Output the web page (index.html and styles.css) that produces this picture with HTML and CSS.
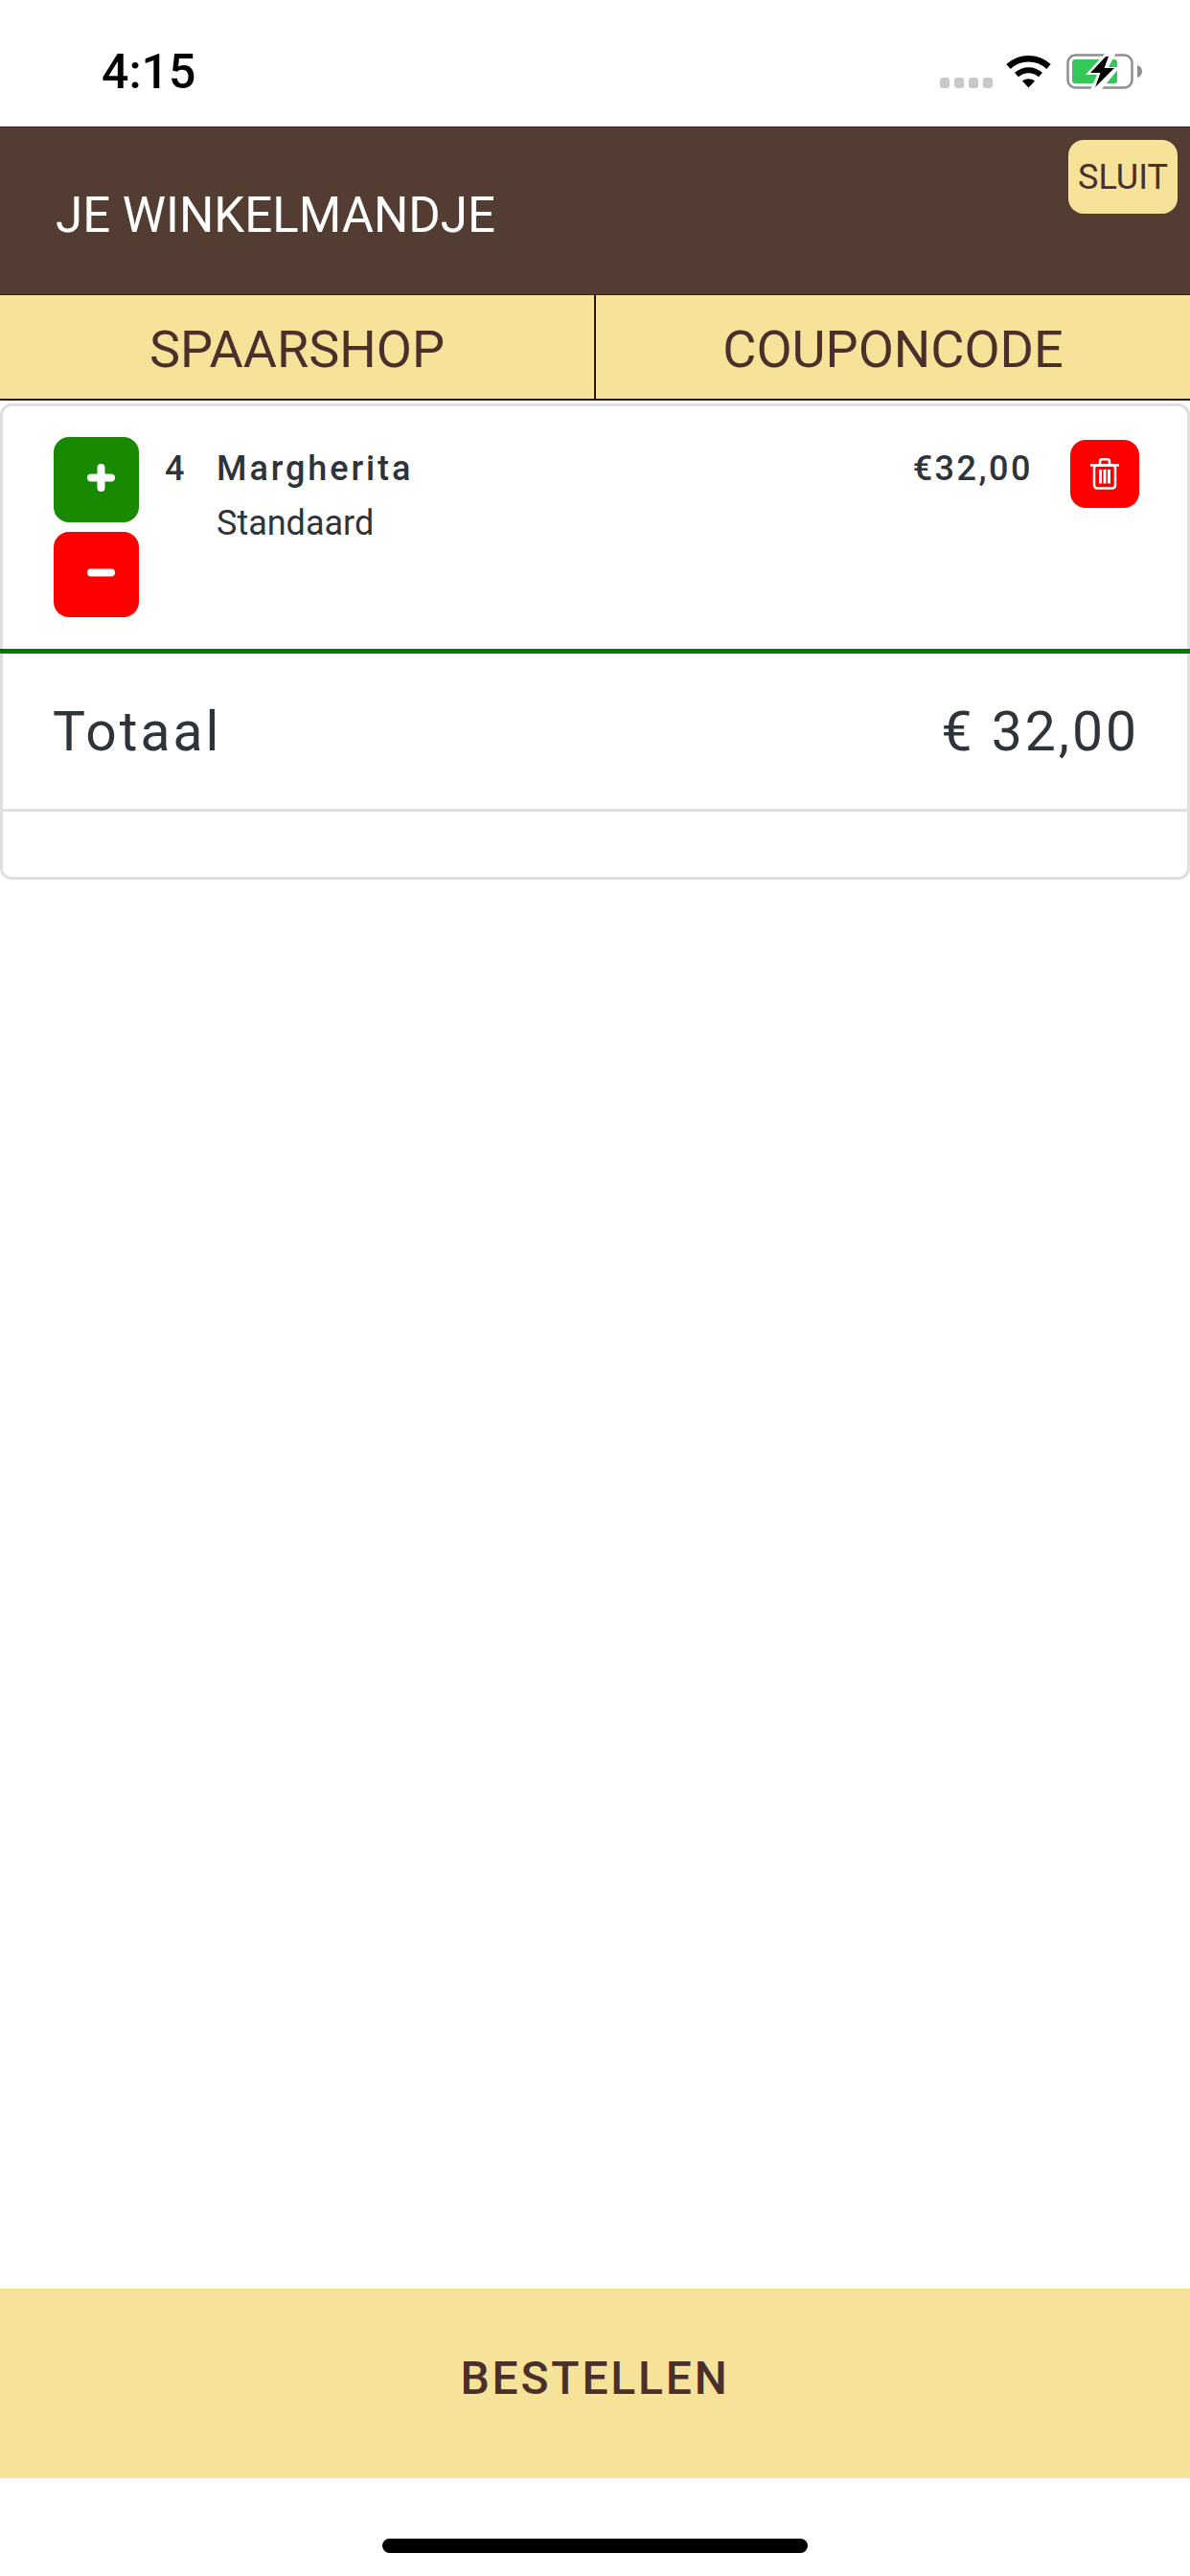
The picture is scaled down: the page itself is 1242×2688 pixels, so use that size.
FILE: index.html
```html
<!DOCTYPE html>
<html lang="en">

<head>
    <meta charset="UTF-8">
    <meta content="width=device-width, initial-scale=1.0" name="viewport">
    <title>Je winkelmandje</title>
    <link rel="stylesheet" href="styles.css">
</head>

<body>
<div class="status-bar">
    <span class="status-time">4:15</span>
    <div class="status-icons">
        <div class="signal-dots"><i></i><i></i><i></i><i></i></div>
        <svg class="wifi" viewBox="0 0 47 35" width="47" height="35">
            <path d="M2.5 12.5C14.5 1.5 32.5 1.5 44.5 12.5" fill="none" stroke="#000" stroke-width="6.5"/>
            <path d="M11 21C18.500 14.500 28.500 14.500 36 21" fill="none" stroke="#000" stroke-width="6"/>
            <path d="M14.500 26.500L23.500 35L32.500 26.500C27 22.500 20 22.500 14.500 26.500Z" fill="#fff"/>
            <path d="M17 27.500L23.500 34.500L30 27.500C26 24.500 21 24.500 17 27.500Z" fill="#000"/>
        </svg>
        <svg class="battery" viewBox="0 0 80 37" width="80" height="37">
            <rect x="1.500" y="1.500" width="67" height="34" rx="8" fill="none" stroke="#8e8e8e" stroke-width="2.500"/>
            <rect x="6" y="6" width="47" height="25" rx="3" fill="#34c759"/>
            <path d="M74 12C77 13 79 15 79 18.500C79 22 77 24 74 25Z" fill="#8e8e8e"/>
            <path d="M41 -1L20 22H32L25 38L36 38L56 14H44L52 -1Z" fill="#fff"/>
            <path d="M41 3L25 20H35.500L30 35L50 15H39.500L44 3Z" fill="#000"/>
        </svg>
    </div>
</div>

<div class="header">
    <h1>JE WINKELMANDJE</h1>
    <button class="close-btn">SLUIT</button>
</div>

<div class="tabs">
    <div class="tab">SPAARSHOP</div>
    <div class="tab">COUPONCODE</div>
</div>

<div class="cart">
    <div class="cart-item">
        <div class="qty-btns">
            <button class="qty-btn plus">
                <svg viewBox="0 0 29 29" width="29" height="29"><path d="M14.500 4V25M4 14.500H25" stroke="#fff" stroke-width="8" stroke-linecap="round"/></svg>
            </button>
            <button class="qty-btn minus">
                <svg viewBox="0 0 29 9" width="29" height="9"><path d="M4 4.500H25" stroke="#fff" stroke-width="8" stroke-linecap="round"/></svg>
            </button>
        </div>
        <span class="item-qty">4</span>
        <div class="item-info">
            <div class="item-name">Margherita</div>
            <div class="item-size">Standaard</div>
        </div>
        <span class="item-price">€32,00</span>
        <button class="delete-btn">
            <svg viewBox="0 0 30 33" width="30" height="33" fill="none" stroke="#fff" stroke-width="2.500">
                <path d="M0 7.500H30M10 7V3.500C10 2 11 1.300 12.500 1.300H17.500C19 1.300 20 2 20 3.500V7"/>
                <rect x="4" y="7.500" width="22" height="24" rx="3"/>
                <path d="M10.500 12V26.500M15 12V26.500M19.500 12V26.500" stroke-width="3"/>
            </svg>
        </button>
    </div>
    <div class="cart-total">
        <span>Totaal</span>
        <span>€ 32,00</span>
    </div>
    <div class="cart-empty"></div>
</div>

<button class="order-btn">BESTELLEN</button>
<div class="home-area"><div class="home-bar"></div></div>
</body>

</html>
```

FILE: styles.css
```css
html, body {
    margin: 0;
    padding: 0;
    height: 100%;
    background-color: #fff;
}

body {
    display: flex;
    flex-direction: column;
    height: 2688px;
    overflow: hidden;
    font-family: Roboto, "Liberation Sans", sans-serif;
}

button {
    padding: 0;
    border: none;
    font-family: inherit;
}

.status-bar {
    display: flex;
    justify-content: space-between;
    align-items: flex-start;
    height: 132px;
    padding: 0 49px 0 106px;
    box-sizing: border-box;
}

.status-time {
    margin-top: 47px;
    font-size: 50px;
    line-height: 56px;
    font-weight: 500;
    color: #000;
}

.status-icons {
    display: flex;
    align-items: flex-end;
    margin-top: 56px;
}

.signal-dots {
    display: flex;
    gap: 5px;
    margin: 0 14px 1px 0;
}

.signal-dots i {
    width: 10px;
    height: 11px;
    border-radius: 3px;
    background-color: #c9c9c9;
}

.wifi {
    margin-right: 16px;
    margin-bottom: 1px;
}

.header {
    display: flex;
    justify-content: space-between;
    align-items: flex-start;
    height: 176px;
    padding: 13px 13px 0 58px;
    box-sizing: border-box;
    background-color: #533d33;
    border-top: 1px solid #3a1f1c;
    border-bottom: 1px solid #3a1f1c;
}

.header h1 {
    margin: 50px 0 0;
    font-size: 51px;
    line-height: 58px;
    font-weight: 400;
    color: #fff;
}

.close-btn {
    width: 114px;
    height: 77px;
    border-radius: 16px;
    background-color: #f7e29a;
    font-size: 36px;
    color: #4a2f2a;
}

.tabs {
    display: flex;
    height: 110px;
    border-bottom: 2px solid #2a1a16;
    box-sizing: border-box;
    background-color: #f7e29a;
}

.tab {
    flex: 1;
    display: flex;
    justify-content: center;
    align-items: center;
    padding-top: 4px;
    font-size: 54px;
    color: #4a2f2a;
}

.tab:first-child {
    border-right: 2px solid #2a1a16;
}

.cart {
    margin-top: 3px;
    border: 3px solid #e0e0e0;
    border-radius: 12px;
    color: #2f343b;
}

.cart-item {
    display: flex;
    align-items: flex-start;
    height: 258px;
    padding: 32px 53px 0 53px;
    box-sizing: border-box;
    border-bottom: 5px solid #007a00;
    margin: 0 -3px;
}

.qty-btns {
    display: flex;
    flex-direction: column;
    gap: 10px;
    margin: 0 27px 0 3px;
}

.qty-btn {
    display: flex;
    justify-content: flex-end;
    align-items: center;
    width: 89px;
    height: 89px;
    padding: 0 25px 4px 0;
    border-radius: 16px;
}

.plus {
    background-color: #198a00;
}

.minus {
    background-color: #ff0000;
}

.item-qty {
    width: 54px;
    margin-top: 13px;
    font-size: 36px;
    line-height: 40px;
    font-weight: 500;
}

.item-info {
    flex: 1;
    margin-top: 13px;
}

.item-name {
    font-size: 36px;
    line-height: 40px;
    font-weight: 500;
    letter-spacing: 2.900px;
}

.item-size {
    margin-top: 17px;
    font-size: 36px;
    line-height: 40px;
}

.item-price {
    margin: 13px 39px 0 0;
    font-size: 36px;
    line-height: 40px;
    font-weight: 500;
    letter-spacing: 2.500px;
}

.delete-btn {
    display: flex;
    justify-content: center;
    align-items: center;
    width: 72px;
    height: 71px;
    margin-top: 3px;
    border-radius: 16px;
    background-color: #ff0000;
}

.cart-total {
    display: flex;
    justify-content: space-between;
    align-items: center;
    height: 165px;
    padding: 0 50px 0 52px;
    box-sizing: border-box;
    border-bottom: 3px solid #e0e0e0;
    font-size: 57px;
    letter-spacing: 3px;
}

.cart-empty {
    height: 68px;
}

.order-btn {
    margin-top: auto;
    height: 198px;
    padding-bottom: 12px;
    background-color: #f7e29a;
    font-size: 48px;
    font-weight: 500;
    letter-spacing: 2.800px;
    color: #4a2f2a;
}

.home-area {
    display: flex;
    justify-content: center;
    height: 102px;
    padding-top: 63px;
    box-sizing: border-box;
}

.home-bar {
    width: 444px;
    height: 15px;
    border-radius: 8px;
    background-color: #000;
}
```
